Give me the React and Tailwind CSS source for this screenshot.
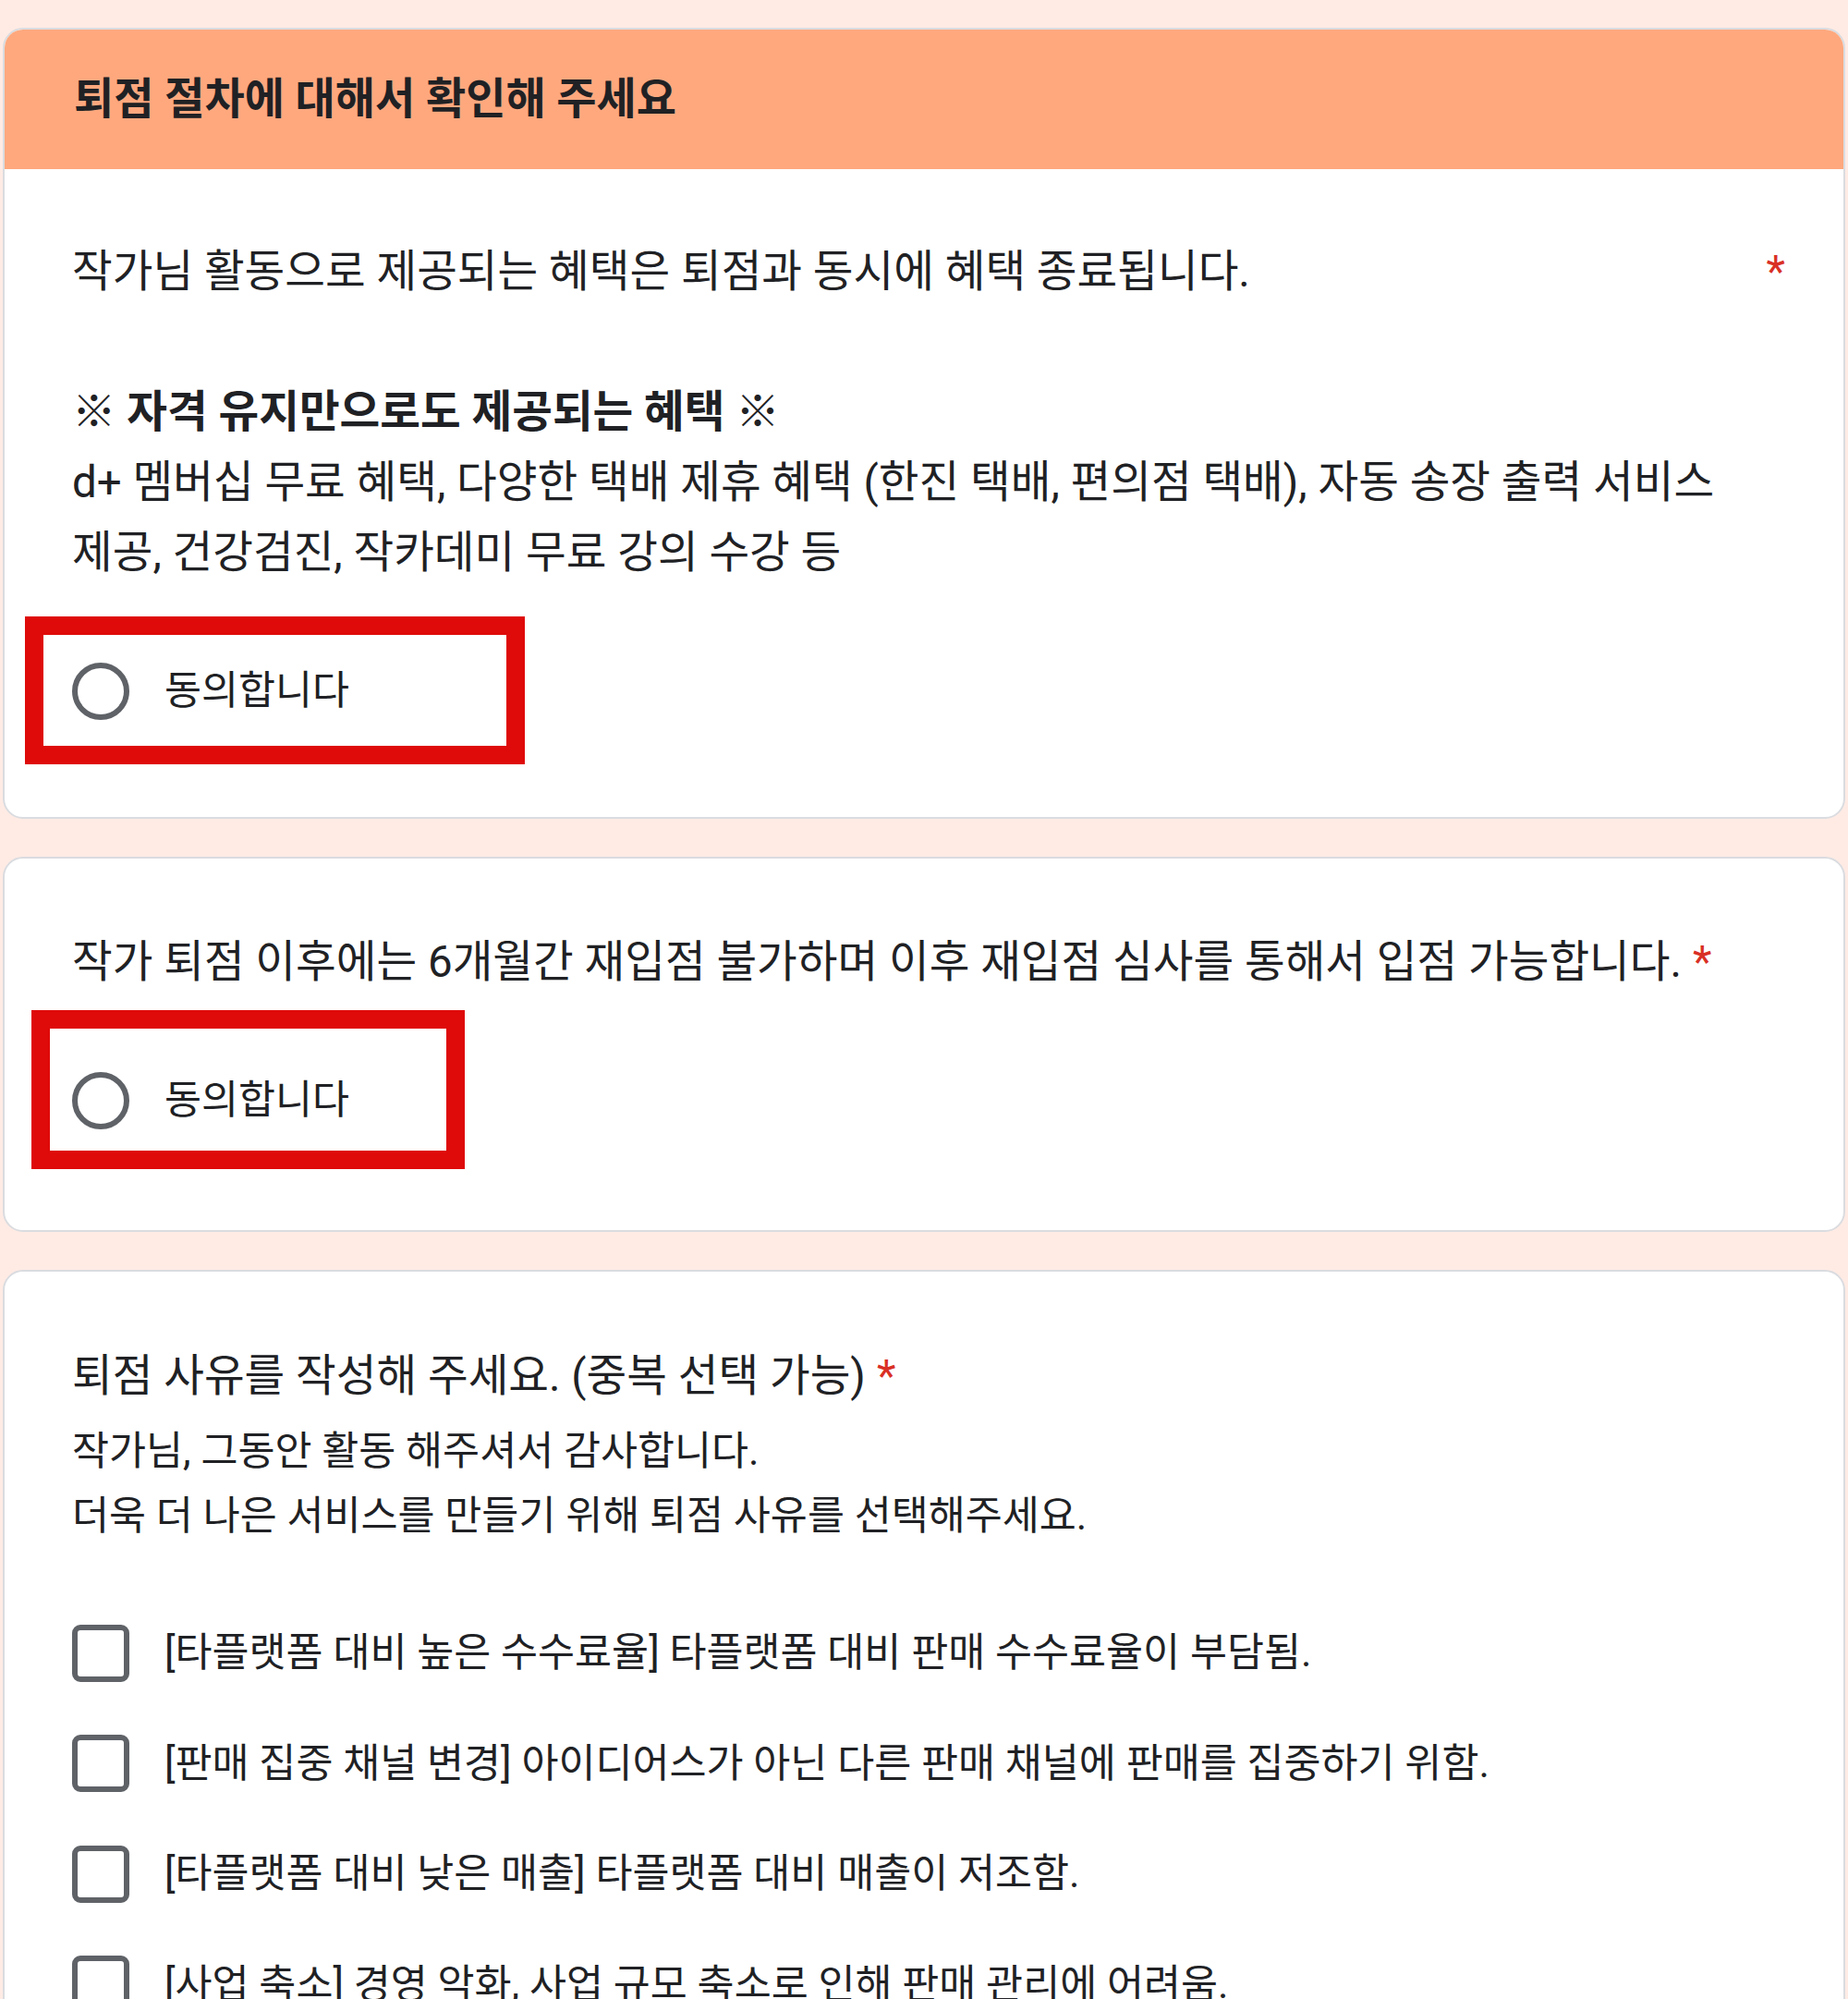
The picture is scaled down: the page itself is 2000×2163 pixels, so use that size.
const font = { fontFamily: 'Roboto, "Noto Sans CJK KR", "Noto Sans", sans-serif' };

function Radio() {
  return <span className="block h-[62px] w-[62px] shrink-0 rounded-full border-[6px] border-[#5f6368]" />;
}

function Checkbox() {
  return <span className="block h-[62px] w-[62px] shrink-0 rounded-[9px] border-[6px] border-[#5f6368]" />;
}

function Star({ className = '' }) {
  return <span className={`pl-[12px] text-[#d93025] ${className}`}>*</span>;
}

// red annotation frame drawn over the option
function OptionRow({ frame }) {
  return (
    <div className="relative flex h-[96px] items-center gap-[38px]">
      <Radio />
      <span className="text-[43.5px] text-[#202124]">동의합니다</span>
      <div className={`pointer-events-none absolute border-[20px] border-[#df0a0a] ${frame}`} />
    </div>
  );
}

function Card({ children, className = '' }) {
  return (
    <div className={`overflow-hidden rounded-[22px] border-2 border-[#dadce0] bg-white ${className}`}>
      {children}
    </div>
  );
}

const reasons = [
  '[타플랫폼 대비 높은 수수료율] 타플랫폼 대비 판매 수수료율이 부담됨.',
  '[판매 집중 채널 변경] 아이디어스가 아닌 다른 판매 채널에 판매를 집중하기 위함.',
  '[타플랫폼 대비 낮은 매출] 타플랫폼 대비 매출이 저조함.',
  '[사업 축소] 경영 악화, 사업 규모 축소로 인해 판매 관리에 어려움.',
];

export default function App() {
  return (
    <div className="min-h-[2163px] bg-[#ffebe4] px-[3px] pt-[30px] pb-[40px]" style={font}>
      <div className="flex flex-col gap-[41px]">
        <Card>
          <div className="flex h-[151px] items-center bg-[#ffa87e] px-[75px]">
            <h1 className="text-[47px] font-bold text-[#202124]">퇴점 절차에 대해서 확인해 주세요</h1>
          </div>
          <div className="px-[73px] pt-[73px] pb-[88px]">
            <div className="flex text-[47.5px] leading-[76px] text-[#202124]">
              <div className="flex-1">
                <p>작가님 활동으로 제공되는 혜택은 퇴점과 동시에 혜택 종료됩니다.</p>
                <p>&nbsp;</p>
                <p className="font-bold">※ 자격 유지만으로도 제공되는 혜택 ※</p>
                <p>d+ 멤버십 무료 혜택, 다양한 택배 제휴 혜택 (한진 택배, 편의점 택배), 자동 송장 출력 서비스 제공, 건강검진, 작카데미 무료 강의 수강 등</p>
              </div>
              <Star className="-mr-[10px]" />
            </div>
            <div className="mt-[64px]">
              <OptionRow frame="-left-[51px] -top-[33px] h-[160px] w-[541px]" />
            </div>
          </div>
        </Card>

        <Card>
          <div className="px-[73px] pt-[74px] pb-[92px]">
            <p className="text-[47.5px] leading-[76px] text-[#202124]">
              작가 퇴점 이후에는 6개월간 재입점 불가하며 이후 재입점 심사를 통해서 입점 가능합니다.
              <Star />
            </p>
            <div className="mt-[64px]">
              <OptionRow frame="-left-[44px] -top-[50px] h-[172px] w-[469px]" />
            </div>
          </div>
        </Card>

        <Card>
          <div className="px-[73px] pt-[75px] pb-[60px]">
            <p className="text-[47.5px] leading-[76px] text-[#202124]">
              퇴점 사유를 작성해 주세요. (중복 선택 가능)
              <Star />
            </p>
            <div className="mt-[9px] text-[43.5px] leading-[70px] text-[#202124]">
              <p>작가님, 그동안 활동 해주셔서 감사합니다.</p>
              <p>더욱 더 나은 서비스를 만들기 위해 퇴점 사유를 선택해주세요.</p>
            </div>
            <div className="mt-[53px] flex flex-col">
              {reasons.map((r) => (
                <label key={r} className="flex h-[119.5px] items-center gap-[38px]">
                  <Checkbox />
                  <span className="text-[43.5px] text-[#202124]">{r}</span>
                </label>
              ))}
            </div>
          </div>
        </Card>
      </div>
    </div>
  );
}
